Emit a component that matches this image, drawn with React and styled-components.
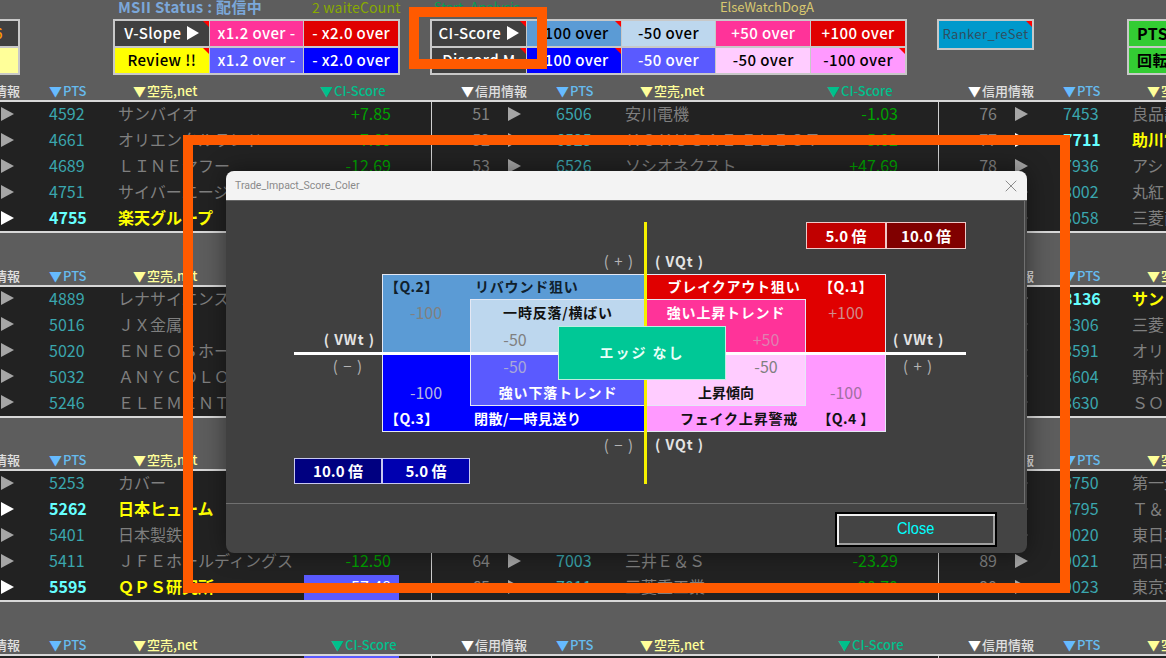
import React from 'react';
import styled, { createGlobalStyle } from 'styled-components';
import { X } from 'lucide-react';

const GlobalStyle = createGlobalStyle`
  html, body {
    margin: 0;
    background: #5d5d5d;
    overflow: hidden;
  }
`;

const FONT = '"Noto Sans CJK JP", "Noto Sans", sans-serif';

const Page = styled.div`
  position: relative;
  width: 1166px;
  height: 658px;
  overflow: hidden;
  background: #5d5d5d;
  font-family: ${FONT};
`;

/* ---------- top toolbar ---------- */

const Toolbar = styled.div`
  display: flex;
  height: 82px;
  width: 1400px;
`;

const ToolGroup = styled.div`
  flex: none;
  width: ${(p) => p.$width}px;
  margin-left: ${(p) => p.$left}px;
`;

const GroupLabels = styled.div`
  display: flex;
  height: 19px;
  font-size: 13px;
  line-height: 14px;
  white-space: nowrap;
`;

const GroupLabel = styled.span`
  color: ${(p) => p.$color};
  font-weight: ${(p) => p.$weight || 400};
  font-size: ${(p) => p.$size || 13}px;
  letter-spacing: ${(p) => p.$track || 0}px;
  margin-left: ${(p) => p.$left}px;
`;

const ButtonTable = styled.div`
  display: grid;
  grid-template-columns: repeat(${(p) => p.$cols}, 1fr);
  grid-auto-rows: ${(p) => p.$rowHeight || 25}px;
  column-gap: 1px;
  row-gap: 2px;
  border: 2px solid #c8c8c8;
  background: #c8c8c8;
`;

const ToolCell = styled.div`
  position: relative;
  display: flex;
  align-items: center;
  justify-content: ${(p) => p.$align || 'center'};
  box-sizing: border-box;
  padding: 0 ${(p) => p.$inset || 0}px 2px;
  background: ${(p) => p.$bg};
  color: ${(p) => p.$fg || '#fff'};
  font-size: ${(p) => p.$size || 15}px;
  font-weight: ${(p) => p.$weight || 500};
  letter-spacing: 0.4px;
  white-space: nowrap;
  overflow: hidden;

  &::after {
    content: '';
    display: ${(p) => (p.$flag ? 'block' : 'none')};
    position: absolute;
    top: 0;
    right: 0;
    border-top: 6px solid #ff0000;
    border-left: 6px solid transparent;
  }
`;

const PlayMark = styled.span`
  display: inline-block;
  margin-left: 6px;
  border-left: 12px solid #fff;
  border-top: 7px solid transparent;
  border-bottom: 7px solid transparent;
`;

/* ---------- stock sections ---------- */

const Sections = styled.div`
  margin-left: -76px;
  width: 1521px;
`;

const Section = styled.section`
  margin-bottom: 33.7px;
`;

const ColumnHeads = styled.div`
  display: grid;
  grid-template-columns: repeat(3, 507px);
  height: 18px;
`;

const HeadGroup = styled.div`
  display: grid;
  grid-template-columns: 95px 84px ${(p) => (p.$wide ? 198 : 187)}px 1fr;
  padding-left: 30px;
  align-items: center;
  font-size: 13px;
  line-height: 18px;
  font-weight: 500;
  white-space: nowrap;
`;

const Head = styled.span`
  color: ${(p) => p.$color};

  &::before {
    content: '▼';
    margin-right: 1px;
    color: ${(p) => p.$mark || p.$color};
  }
`;

const Board = styled.div`
  display: grid;
  grid-template-columns: repeat(3, 507px);
  height: 129px;
  overflow: hidden;
  background: #222;
  border-top: 2px solid #d8d8d8;
  border-bottom: 2px solid #d8d8d8;
`;

const BoardGroup = styled.div`
  height: 129px;
  box-shadow: inset 1px 0 0 ${(p) => (p.$line ? '#d0d0d0' : 'transparent')};
`;

const Row = styled.div`
  display: grid;
  grid-template-columns: 59px 18px 14px 34px 69px 186px 95px 32px;
  align-items: center;
  box-sizing: border-box;
  height: 26px;
  padding-bottom: 3px;
  font-size: 16px;
  line-height: 23px;
  white-space: nowrap;
`;

const RankCell = styled.span`
  grid-column: 1;
  text-align: right;
  color: #808080;
`;

const Arrow = styled.span`
  grid-column: 3;
  width: 0;
  height: 0;
  border-left: 13px solid ${(p) => (p.$bright ? '#fff' : '#a6a6a6')};
  border-top: 7.5px solid transparent;
  border-bottom: 7.5px solid transparent;
`;

const CodeCell = styled.span`
  grid-column: 5;
  color: ${(p) => (p.$bright ? '#66ffff' : '#3aa6ae')};
  font-weight: ${(p) => (p.$bright ? 700 : 400)};
`;

const NameCell = styled.span`
  grid-column: 6;
  color: ${(p) => (p.$bright ? '#ffff00' : '#7f7f7f')};
  font-weight: ${(p) => (p.$bright ? 700 : 400)};
`;

const ScoreCell = styled.span`
  grid-column: 7;
  align-self: stretch;
  margin-bottom: -3px;
  padding-right: 8px;
  text-align: right;
  background: ${(p) => (p.$hot ? '#5a5aff' : 'transparent')};
  color: ${(p) => (p.$hot ? '#fff' : '#00a000')};
`;

/* ---------- dialog ---------- */

const Dialog = styled.div`
  position: absolute;
  left: 226px;
  top: 171px;
  width: 801px;
  height: 382px;
  display: flex;
  flex-direction: column;
  border-radius: 8px;
  overflow: hidden;
  background: #444;
  box-shadow: 0 0 24px rgba(0, 0, 0, 0.45);
`;

const TitleBar = styled.div`
  flex: none;
  height: 30px;
  display: flex;
  align-items: center;
  justify-content: space-between;
  padding: 0 6px 0 9px;
  background: #f3f3f3;
  border-bottom: 1px solid #666;
  box-sizing: border-box;
  color: #8a8a8a;
  font-family: Roboto, "Liberation Sans", sans-serif;
  font-size: 10.5px;
`;

const DialogBody = styled.div`
  flex: none;
  height: 303px;
  width: 799px;
  box-sizing: border-box;
  padding: 21px 0 0 68px;
  background: #404040;
  border-right: 1px solid #707070;
  border-bottom: 1px solid #707070;
`;

const DialogFoot = styled.div`
  flex: 1;
  display: flex;
  align-items: center;
  justify-content: flex-end;
  padding-right: 30px;
`;

const CloseButton = styled.button`
  width: 162px;
  height: 35px;
  margin-top: 1px;
  border: 2px solid #000;
  box-shadow: inset 2px 2px 0 #f0f0f0, inset -2px -2px 0 #a0a0a0;
  background: #444;
  color: #00ffff;
  font-family: "Liberation Sans", sans-serif;
  font-size: 17px;
`;

const CloseText = styled.span`
  display: inline-block;
  transform: scaleX(0.86);
`;

/* grid lines sit on the edges of the coloured boxes */
const Matrix = styled.div`
  display: grid;
  grid-template-columns: repeat(4, 88px) repeat(4, 80px);
  grid-template-rows: 27px 25px 25px 27px 27px 27px 26px 26px 26px 26px;
  width: 672px;
  height: 262px;
`;

const Fill = styled.div`
  grid-column: ${(p) => p.$col};
  grid-row: ${(p) => p.$row};
  background: ${(p) => p.$bg};
  border: 1px solid ${(p) => p.$edge || '#e4e8f4'};
  box-sizing: border-box;
`;

const HAxis = styled.div`
  grid-column: 1 / 9;
  grid-row: 5 / 7;
  align-self: center;
  height: 3px;
  background: #fff;
`;

const VAxis = styled.div`
  grid-column: 5;
  grid-row: 1 / 11;
  justify-self: start;
  margin-left: -2px;
  width: 3px;
  background: #f5f000;
`;

const Centre = styled.div`
  grid-column: 4 / 6;
  grid-row: 5 / 7;
  display: flex;
  align-items: center;
  justify-content: center;
  box-sizing: border-box;
  padding-bottom: 3px;
  background: #00c896;
  border: 1px solid #bfeee0;
  color: #e8fff8;
  font-size: 14px;
  font-weight: 700;
  letter-spacing: 2px;
`;

const Label = styled.div`
  grid-column: ${(p) => p.$col};
  grid-row: ${(p) => p.$row};
  display: flex;
  align-items: center;
  justify-content: ${(p) => p.$justify || 'center'};
  margin-left: ${(p) => p.$left || 0}px;
  margin-right: ${(p) => p.$right || 0}px;
  padding-bottom: 2px;
  color: ${(p) => p.$color || '#fff'};
  font-size: ${(p) => p.$size || 14}px;
  font-weight: ${(p) => p.$weight || 700};
  letter-spacing: ${(p) => p.$track || 0}px;
  white-space: nowrap;
`;

const Multiple = styled.div`
  grid-column: ${(p) => p.$col};
  grid-row: ${(p) => p.$row};
  display: flex;
  align-items: center;
  justify-content: center;
  box-sizing: border-box;
  padding-bottom: 1px;
  background: ${(p) => p.$bg};
  border: 1px solid ${(p) => p.$edge};
  color: #fff;
  font-size: 15px;
  font-weight: 700;
`;

/* the two orange marks someone drew on top of the screenshot */
const Marker = styled.div`
  position: absolute;
  left: ${(p) => p.$x}px;
  top: ${(p) => p.$y}px;
  width: ${(p) => p.$w}px;
  height: ${(p) => p.$h}px;
  box-sizing: border-box;
  border: 10px solid #ff5a00;
`;

/* ---------- data ---------- */

const sections = [
  {
    groups: [
      [
        [26, 4592, 'サンバイオ', '+7.85'],
        [27, 4661, 'オリエンタルランド', '-7.60'],
        [28, 4689, 'ＬＩＮＥヤフー', '-12.69'],
        [29, 4751, 'サイバーエージェント', '-3.20'],
        [30, 4755, '楽天グループ', '+5.12', true],
      ],
      [
        [51, 6506, '安川電機', '-1.03'],
        [52, 6525, 'ＫＯＫＵＳＡＩ ＥＬＥＣＴ', '-5.02'],
        [53, 6526, 'ソシオネクスト', '+47.69'],
        [54, 6594, 'ニデック', '-2.14'],
        [55, 6723, 'ルネサス', '+3.40'],
      ],
      [
        [76, 7453, '良品計画', '+1.20'],
        [77, 7711, '助川電気工業', '+9.80', true],
        [78, 7936, 'アシックス', '-4.10'],
        [79, 8002, '丸紅', '+2.30'],
        [80, 8058, '三菱商事', '-1.70'],
      ],
    ],
  },
  {
    groups: [
      [
        [31, 4889, 'レナサイエンス', '+2.10'],
        [32, 5016, 'ＪＸ金属', '+4.33'],
        [33, 5020, 'ＥＮＥＯＳホールディングス', '-3.05'],
        [34, 5032, 'ＡＮＹＣＯＬＯＲ', '+1.44'],
        [35, 5246, 'ＥＬＥＭＥＮＴＳ', '-6.21'],
      ],
      [
        [56, 6758, 'ソニーグループ', '+1.10'],
        [57, 6857, 'アドバンテスト', '+8.20'],
        [58, 6861, 'キーエンス', '-0.80'],
        [59, 6920, 'レーザーテック', '+6.15'],
        [60, 6981, '村田製作所', '-2.02'],
      ],
      [
        [81, 8136, 'サンリオ', '+6.40', true],
        [82, 8306, '三菱ＵＦＪ', '+1.90'],
        [83, 8591, 'オリックス', '-0.60'],
        [84, 8604, '野村ＨＤ', '+2.75'],
        [85, 8630, 'ＳＯＭＰＯ', '-1.15'],
      ],
    ],
  },
  {
    groups: [
      [
        [36, 5253, 'カバー', '-4.90'],
        [37, 5262, '日本ヒューム', '+11.20', true],
        [38, 5401, '日本製鉄', '-1.88'],
        [39, 5411, 'ＪＦＥホールディングス', '-12.50'],
        [40, 5595, 'ＱＰＳ研究所', '-57.48', true, true],
      ],
      [
        [61, 6988, '日東電工', '+0.70'],
        [62, 7011, '川崎重工業', '+3.25'],
        [63, 6146, 'ディスコ', '-2.95'],
        [64, 7003, '三井Ｅ＆Ｓ', '-23.29'],
        [65, 7011, '三菱重工業', '-20.70'],
      ],
      [
        [86, 8750, '第一生命', '+0.55'],
        [87, 8795, 'Ｔ＆Ｄ', '-0.40'],
        [88, 9020, '東日本旅客', '+1.05'],
        [89, 9021, '西日本旅客', '-0.95'],
        [90, 9023, '東京地下鉄', '+0.35'],
      ],
    ],
  },
  {
    wide: true,
    groups: [
      [[41, 5803, 'フジクラ', '-60.10', false, true]],
      [[66, 7012, '川崎重工業', '+1.10']],
      [[91, 9101, '日本郵船', '+0.25']],
    ],
  },
];

function StockRow({ rank, code, name, score, bright, hot }) {
  return (
    <Row>
      <RankCell>{rank}</RankCell>
      <Arrow $bright={bright} />
      <CodeCell $bright={bright}>{code}</CodeCell>
      <NameCell $bright={bright}>{name}</NameCell>
      <ScoreCell $hot={hot}>{score}</ScoreCell>
    </Row>
  );
}

function StockSection({ wide, groups }) {
  return (
    <Section>
      <ColumnHeads>
        {groups.map((_, index) => (
          <HeadGroup key={index} $wide={wide}>
            <Head $color="#e0e0e0" $mark="#fff">信用情報</Head>
            <Head $color="#66bbee" $mark="#66bbff">PTS</Head>
            <Head $color="#ffff99">空売,net</Head>
            <Head $color="#00c08c">CI-Score</Head>
          </HeadGroup>
        ))}
      </ColumnHeads>
      <Board>
        {groups.map((rows, index) => (
          <BoardGroup key={index} $line={index > 0}>
            {rows.map(([rank, code, name, score, bright, hot]) => (
              <StockRow key={rank} rank={rank} code={code} name={name} score={score} bright={bright} hot={hot} />
            ))}
          </BoardGroup>
        ))}
      </Board>
    </Section>
  );
}

function ImpactMatrix() {
  return (
    <Matrix>
      <Multiple $col="7" $row="1" $bg="#c00000" $edge="#f0c8c8">5.0 倍</Multiple>
      <Multiple $col="8" $row="1" $bg="#800000" $edge="#f0c8c8">10.0 倍</Multiple>

      <Label $col="3 / 5" $row="2" $justify="flex-end" $right="12" $color="#b4b4b4" $size="15" $weight="400" $track="1">( + )</Label>
      <Label $col="5 / 7" $row="2" $justify="flex-start" $left="9" $color="#e4e4e4" $track="1">( VQt )</Label>

      <Fill $col="2 / 5" $row="3 / 6" $bg="#5b9bd5" />
      <Fill $col="5 / 8" $row="3 / 6" $bg="#e00000" />
      <Fill $col="2 / 5" $row="6 / 9" $bg="#0000ff" />
      <Fill $col="5 / 8" $row="6 / 9" $bg="#ff99ff" />
      <Fill $col="3 / 5" $row="4 / 6" $bg="#bdd7ee" />
      <Fill $col="5 / 7" $row="4 / 6" $bg="#ff3399" />
      <Fill $col="3 / 5" $row="6 / 8" $bg="#5a5aff" />
      <Fill $col="5 / 7" $row="6 / 8" $bg="#ffccff" />

      <HAxis />
      <VAxis />

      <Label $col="2" $row="3" $justify="flex-start" $left="3" $color="#10202c" $track="0.4">【Q.2】</Label>
      <Label $col="3 / 5" $row="3" $justify="flex-start" $left="5" $color="#10202c" $track="0.8">リバウンド狙い</Label>
      <Label $col="5 / 7" $row="3" $left="16" $track="0.8">ブレイクアウト狙い</Label>
      <Label $col="7" $row="3" $track="0.4">【Q.1】</Label>

      <Label $col="2" $row="4" $color="#808080" $size="16" $weight="400">-100</Label>
      <Label $col="3 / 5" $row="4" $color="#111" $track="0.8">一時反落/横ばい</Label>
      <Label $col="5 / 7" $row="4" $track="0.8">強い上昇トレンド</Label>
      <Label $col="7" $row="4" $color="#d08a8a" $size="16" $weight="400">+100</Label>

      <Label $col="3" $row="5" $color="#808080" $size="16" $weight="400" $left="2">-50</Label>
      <Label $col="6" $row="5" $color="#e080b0" $size="16" $weight="400">+50</Label>

      <Label $col="3" $row="6" $color="#a8a8d8" $size="16" $weight="400" $left="2">-50</Label>
      <Label $col="6" $row="6" $color="#808080" $size="16" $weight="400">-50</Label>

      <Label $col="2" $row="7" $color="#b8b8e0" $size="16" $weight="400">-100</Label>
      <Label $col="3 / 5" $row="7" $track="0.8">強い下落トレンド</Label>
      <Label $col="5 / 7" $row="7" $color="#111">上昇傾向</Label>
      <Label $col="7" $row="7" $color="#a070a0" $size="16" $weight="400">-100</Label>

      <Label $col="2" $row="8" $justify="flex-start" $left="3" $track="0.4">【Q.3】</Label>
      <Label $col="3 / 5" $row="8" $justify="flex-start" $left="4" $track="0.5">閉散/一時見送り</Label>
      <Label $col="5 / 7" $row="8" $left="26" $color="#111" $track="0.8">フェイク上昇警戒</Label>
      <Label $col="7" $row="8" $color="#111" $track="0.4">【Q.4 】</Label>

      <Centre>エッジ なし</Centre>

      <Label $col="1" $row="5" $justify="flex-end" $right="7" $color="#e4e4e4" $track="1">( VWt )</Label>
      <Label $col="8" $row="5" $justify="flex-start" $left="7" $color="#e4e4e4" $track="1">( VWt )</Label>
      <Label $col="1" $row="6" $justify="flex-end" $right="19" $color="#b4b4b4" $size="15" $weight="400" $track="1">( − )</Label>
      <Label $col="8" $row="6" $justify="flex-start" $left="17" $color="#b4b4b4" $size="15" $weight="400" $track="1">( + )</Label>

      <Label $col="3 / 5" $row="9" $justify="flex-end" $right="12" $color="#b4b4b4" $size="15" $weight="400" $track="1">( − )</Label>
      <Label $col="5 / 7" $row="9" $justify="flex-start" $left="9" $color="#e4e4e4" $track="1">( VQt )</Label>

      <Multiple $col="1" $row="10" $bg="#000080" $edge="#c8c8f0">10.0 倍</Multiple>
      <Multiple $col="2" $row="10" $bg="#0000b0" $edge="#c8c8f0">5.0 倍</Multiple>
    </Matrix>
  );
}

export default function App() {
  return (
    <Page>
      <GlobalStyle />

      <Toolbar>
        <ToolGroup $width={52} $left={-32}>
          <GroupLabels />
          <ButtonTable $cols={1}>
            <ToolCell $bg="#404040" $fg="#ff9900">76</ToolCell>
            <ToolCell $bg="#ffff99" $fg="#000" />
          </ButtonTable>
        </ToolGroup>

        <ToolGroup $width={287} $left={93}>
          <GroupLabels>
            <GroupLabel $color="#7ba7d9" $weight={700} $size={15} $track={0.3} $left={5}>MSII Status : 配信中</GroupLabel>
            <GroupLabel $color="#88aa00" $size={14} $track={0.2} $left={50}>2 waiteCount</GroupLabel>
          </GroupLabels>
          <ButtonTable $cols={3}>
            <ToolCell $bg="#404040" $flag>V-Slope<PlayMark /></ToolCell>
            <ToolCell $bg="#ff3399">x1.2 over -</ToolCell>
            <ToolCell $bg="#e00000">- x2.0 over</ToolCell>
            <ToolCell $bg="#ffff00" $fg="#000" $flag>Review !!</ToolCell>
            <ToolCell $bg="#5a5aff">x1.2 over -</ToolCell>
            <ToolCell $bg="#0000ff">- x2.0 over</ToolCell>
          </ButtonTable>
        </ToolGroup>

        <ToolGroup $width={477} $left={30}>
          <GroupLabels>
            <GroupLabel $color="#00a050" $left={4}>Start_Analysis</GroupLabel>
            <GroupLabel $color="#d9c870" $left={200}>ElseWatchDogA</GroupLabel>
          </GroupLabels>
          <ButtonTable $cols={5}>
            <ToolCell $bg="#404040" $flag>CI-Score<PlayMark /></ToolCell>
            <ToolCell $bg="#5b9bd5" $fg="#000" $flag>-100 over</ToolCell>
            <ToolCell $bg="#bdd7ee" $fg="#000">-50 over</ToolCell>
            <ToolCell $bg="#ff3399">+50 over</ToolCell>
            <ToolCell $bg="#e00000">+100 over</ToolCell>
            <ToolCell $bg="#404040" $flag>Discord M</ToolCell>
            <ToolCell $bg="#0000ff" $flag>-100 over</ToolCell>
            <ToolCell $bg="#5a5aff">-50 over</ToolCell>
            <ToolCell $bg="#ffccff" $fg="#000">-50 over</ToolCell>
            <ToolCell $bg="#ff99ff" $fg="#000" $flag>-100 over</ToolCell>
          </ButtonTable>
        </ToolGroup>

        <ToolGroup $width={97} $left={30}>
          <GroupLabels />
          <ButtonTable $cols={1} $rowHeight={27}>
            <ToolCell $bg="#0099cc" $fg="#2f4f60" $size={13} $weight={400} $flag>Ranker_reSet</ToolCell>
          </ButtonTable>
        </ToolGroup>

        <ToolGroup $width={100} $left={93}>
          <GroupLabels />
          <ButtonTable $cols={1}>
            <ToolCell $bg="#33cc33" $fg="#000" $align="flex-start" $inset={8} $size={16} $weight={700}>PTS</ToolCell>
            <ToolCell $bg="#33cc33" $fg="#000" $align="flex-start" $inset={8} $size={15} $weight={700}>回転</ToolCell>
          </ButtonTable>
        </ToolGroup>
      </Toolbar>

      <Sections>
        {sections.map((section, index) => (
          <StockSection key={index} wide={section.wide} groups={section.groups} />
        ))}
      </Sections>

      <Dialog>
        <TitleBar>
          <span>Trade_Impact_Score_Coler</span>
          <X size={20} strokeWidth={1} color="#777" />
        </TitleBar>
        <DialogBody>
          <ImpactMatrix />
        </DialogBody>
        <DialogFoot>
          <CloseButton><CloseText>Close</CloseText></CloseButton>
        </DialogFoot>
      </Dialog>

      <Marker $x={409} $y={7} $w={138} $h={62} />
      <Marker $x={183} $y={135} $w={887} $h={458} />
    </Page>
  );
}
